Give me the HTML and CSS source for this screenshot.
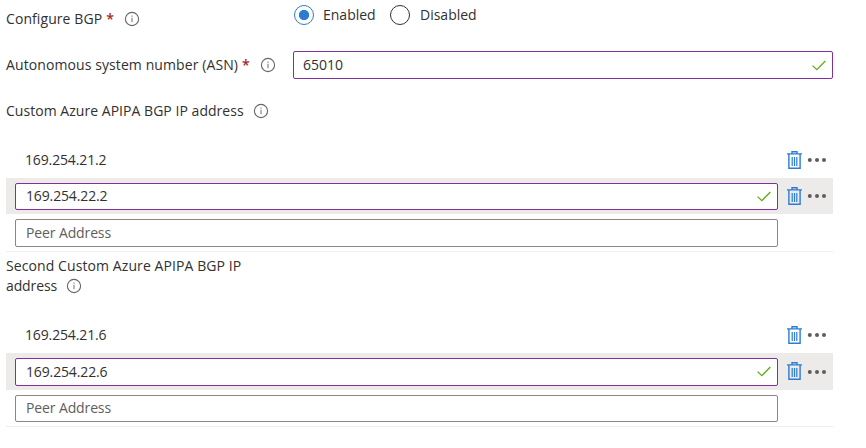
FILE: index.html
```
<!DOCTYPE html>
<html lang="en">
<head>
<meta charset="utf-8">
<title>Configure BGP</title>
<link rel="stylesheet" href="styles.css">
</head>
<body>
<svg class="defs" aria-hidden="true">
  <symbol id="info" viewBox="0 0 16 16"><circle cx="8" cy="8" r="6.6" fill="none" stroke="#686664" stroke-width="1.1"/><path d="M8 6.7v4.6M8 4.5v1.3" stroke="#8a8886" stroke-width="1.2"/></symbol>
  <symbol id="check" viewBox="0 0 14 11"><path d="M.6 5.6 4.8 9.7 13.3 1" fill="none" stroke="#5fae13" stroke-width="1.3"/></symbol>
  <symbol id="trash" viewBox="0 0 15 19"><path d="M0 2.9h15M5 2.9V.7h5v2.2M1.9 3v14.2h11.2V3" fill="none" stroke="#2b7cd3" stroke-width="1.4"/><path d="M5.2 6v9M7.5 6v9M9.8 6v9" stroke="#2b7cd3" stroke-width="1.2"/></symbol>
  <symbol id="dots" viewBox="0 0 20 6"><g fill="#5f5d5b"><circle cx="2.8" cy="3" r="2"/><circle cx="10" cy="3" r="2"/><circle cx="17" cy="3" r="2"/></g></symbol>
</svg>
<main class="form">
  <div class="field field-radio">
    <div class="label"><span class="t-configure">Configure BGP</span><span class="required">*</span><svg class="info"><use href="#info"/></svg></div>
    <div class="radios">
      <span class="radio checked"></span><span class="t-enabled">Enabled</span>
      <span class="radio"></span><span class="t-disabled">Disabled</span>
    </div>
  </div>
  <div class="field field-asn">
    <div class="label"><span class="t-asn">Autonomous system number (ASN)</span><span class="required">*</span><svg class="info"><use href="#info"/></svg></div>
    <div class="input valid"><span class="t-num">65010</span><svg class="check"><use href="#check"/></svg></div>
  </div>
  <div class="label label-custom"><span class="t-custom">Custom Azure APIPA BGP IP address</span><svg class="info"><use href="#info"/></svg></div>
  <div class="list first">
    <div class="row saved"><div class="cell"><span class="t-ip">169.254.21.2</span></div><svg class="trash"><use href="#trash"/></svg><svg class="dots"><use href="#dots"/></svg></div>
    <div class="row active"><div class="input valid"><span class="t-ip">169.254.22.2</span><svg class="check"><use href="#check"/></svg></div><svg class="trash"><use href="#trash"/></svg><svg class="dots"><use href="#dots"/></svg></div>
    <div class="row blank"><div class="input"><span class="t-peer">Peer Address</span></div></div>
  </div>
  <div class="label label-second">
    <div class="line"><span class="t-second">Second Custom Azure APIPA BGP IP</span></div>
    <div class="line"><span class="t-address">address</span><svg class="info"><use href="#info"/></svg></div>
  </div>
  <div class="list second">
    <div class="row saved"><div class="cell"><span class="t-ip">169.254.21.6</span></div><svg class="trash"><use href="#trash"/></svg><svg class="dots"><use href="#dots"/></svg></div>
    <div class="row active"><div class="input valid"><span class="t-ip">169.254.22.6</span><svg class="check"><use href="#check"/></svg></div><svg class="trash"><use href="#trash"/></svg><svg class="dots"><use href="#dots"/></svg></div>
    <div class="row blank"><div class="input"><span class="t-peer">Peer Address</span></div></div>
  </div>
</main>
</body>
</html>
```
FILE: styles.css
```
* { box-sizing: border-box; }
body { margin: 0; background: #fff; color: #323130; font: 14px/20px "Open Sans", "Noto Sans", sans-serif; }
svg { display: block; flex: none; }
.defs { display: none; }
.form { width: 833px; padding-left: 6px; white-space: nowrap; }
.field { display: grid; grid-template-columns: 287px 540px; }
.field-radio { height: 51px; }
.field-asn { height: 28px; }
.label { display: flex; align-items: center; height: 28px; }
.field-radio .label { margin-top: 5px; }
.required { color: #a4262c; margin-left: 4px; width: 7px; font-weight: 600; }
.info { width: 16px; height: 16px; margin-left: 11px; }
.label > span:first-child + .info { margin-left: 9px; }
.radios { display: flex; align-items: center; height: 30px; padding-left: 1px; }
.radio { width: 20px; height: 20px; margin-right: 10px; border: 1px solid #323130; border-radius: 50%; }
.radio.checked { margin-right: 9px; border-color: #2b7cd3; background: radial-gradient(circle, #2b7cd3 4.8px, transparent 5.4px); }
.t-enabled { width: 67px; }
.t-configure { letter-spacing: .08px; }
.t-asn { letter-spacing: .095px; }
.t-custom { letter-spacing: .035px; }
.t-second { letter-spacing: .09px; }
.t-address { letter-spacing: -.12px; }
.t-ip { letter-spacing: -.14px; }
.t-peer { letter-spacing: -.12px; }
.input { display: flex; align-items: center; height: 28px; padding: 0 6px 0 9px; border: 1px solid #8a8886; border-radius: 2px; background: #fff; }
.input.valid { border-color: #8230a0; }
.check { width: 14px; height: 11px; margin-left: auto; }
.label-custom { margin-top: 18px; }
.list { width: 827px; border-bottom: 1px solid #f0efee; }
.list.first { margin-top: 17px; }
.list.second { margin-top: 21px; }
.row { display: flex; align-items: center; height: 36px; padding-left: 9px; }
.row .input { width: 763px; padding-left: 10px; }
.row .cell { width: 763px; padding-left: 10px; }
.row.active { background: #edebe9; }
.first .active .input { height: 27px; }
.first .blank { height: 37px; }
.second .active { height: 37px; }
.second .blank .input { height: 27px; }
.trash { width: 15px; height: 19px; margin-left: 9px; }
.dots { width: 20px; height: 6px; margin-left: 5px; }
.input:not(.valid) { color: #605e5c; }
.label-second { display: block; height: 40px; margin-top: 4px; }
.line { display: flex; align-items: center; height: 20px; }
.line .info { margin-left: 9px; }
```
